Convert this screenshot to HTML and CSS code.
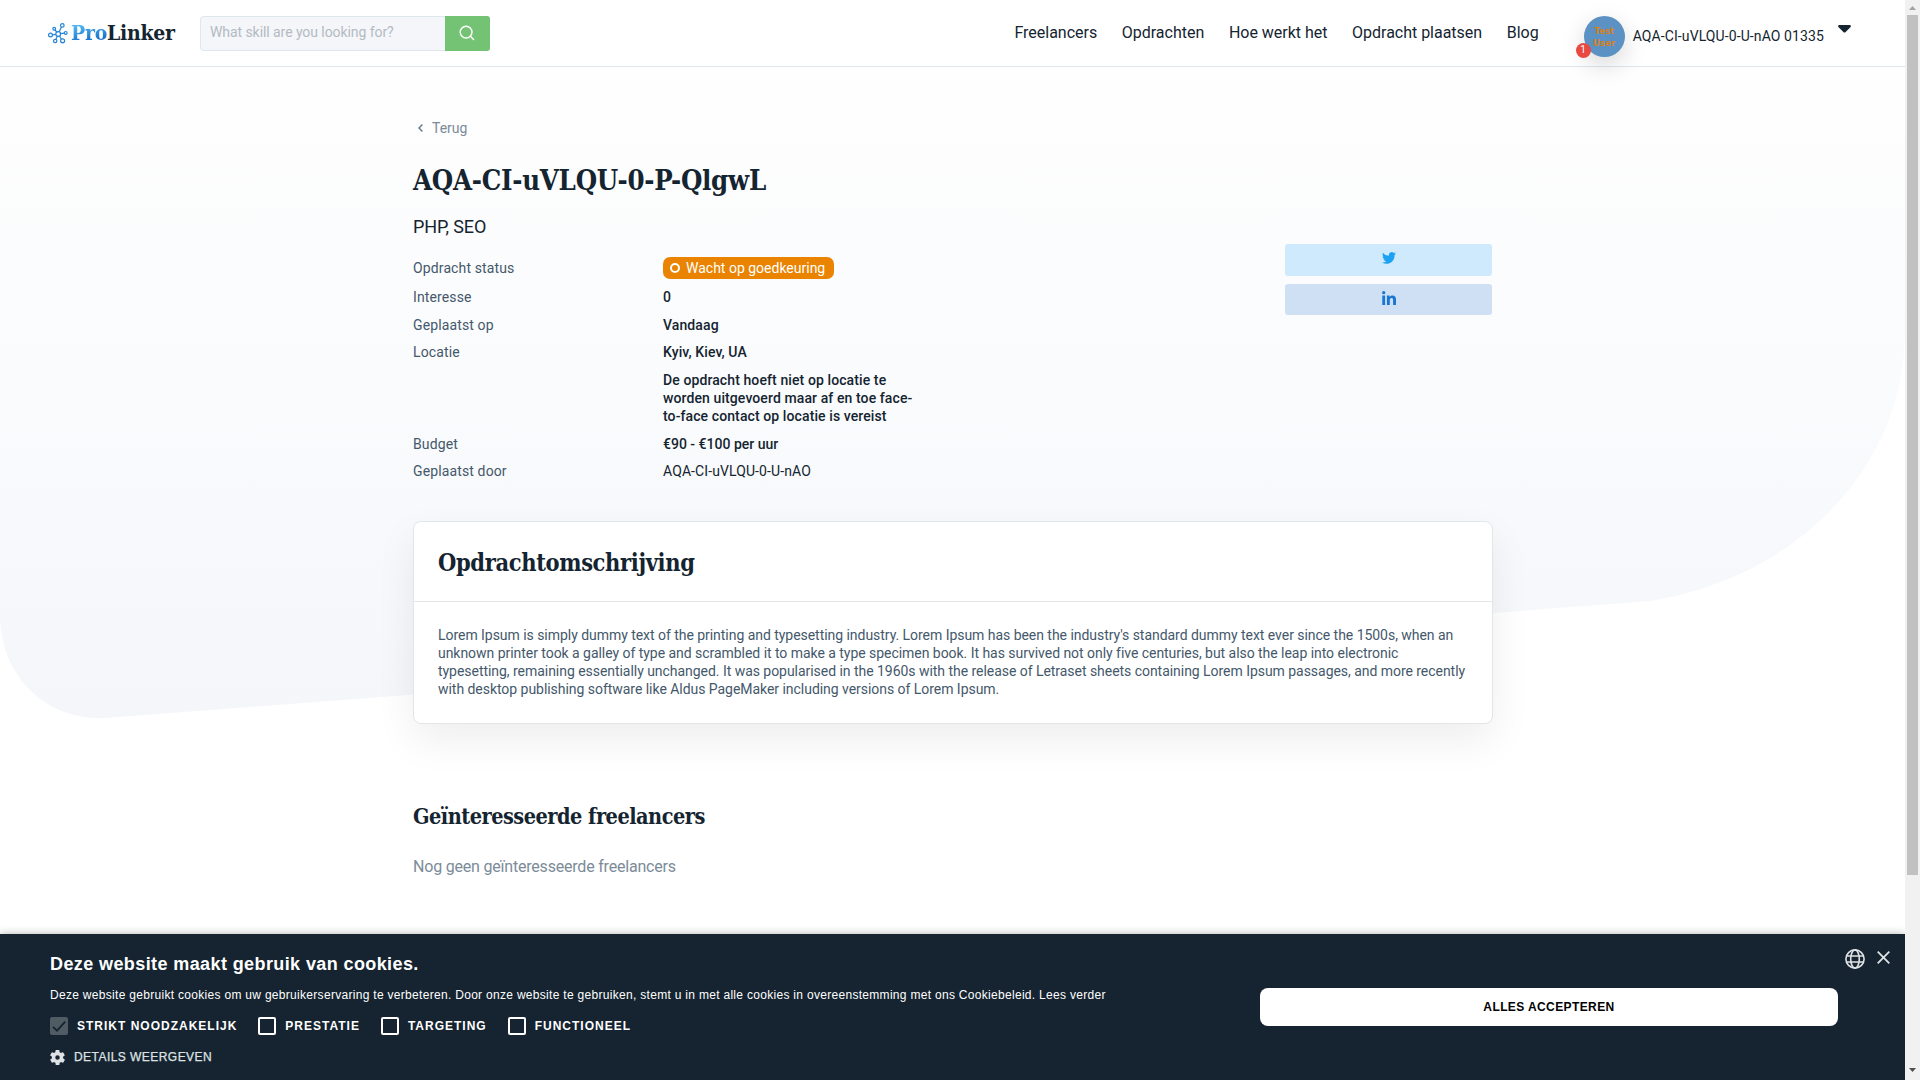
FILE: index.html
```html
<!DOCTYPE html>
<html lang="nl">
<head>
<meta charset="utf-8">
<title>AQA-CI-uVLQU-0-P-QlgwL - ProLinker</title>
<link rel="stylesheet" href="styles.css">
</head>
<body>
<div class="page">
  <header class="topbar">
    <a class="logo">
      <svg class="logo-mark" width="20" height="21" viewBox="0 0 20 21" fill="none" stroke="#2484d6" stroke-width="1.2">
        <circle cx="10.2" cy="11" r="2.4"/><circle cx="14.3" cy="2.4" r="1.8"/><circle cx="6.2" cy="5.8" r="1.4"/><circle cx="2.5" cy="12" r="1.9"/><circle cx="17.7" cy="9.9" r="1.4"/><circle cx="7.2" cy="18" r="1.7"/><circle cx="14.6" cy="17.8" r="2"/>
        <path d="M11.2 8.8l2.3-4.7M8.8 9L7 7M7.8 11.3l-3.4.5M12.6 10.7l3.7-.6M9.3 13.2l-1.5 3.2M11.5 13l1.9 3.2"/>
      </svg>
      <span class="logo-text"><span class="logo-pro">Pro</span>Linker</span>
    </a>
    <div class="search">
      <span class="search-input">What skill are you looking for?</span>
      <span class="search-button">
        <svg width="16" height="16" viewBox="0 0 16 16" fill="none" stroke="#fff" stroke-width="1.4" stroke-linecap="round"><circle cx="7.1" cy="7.1" r="5.9"/><path d="M11.6 11.6l3 3"/></svg>
      </span>
    </div>
    <nav class="nav"><a>Freelancers</a><a>Opdrachten</a><a>Hoe werkt het</a><a>Opdracht plaatsen</a><a>Blog</a></nav>
    <div class="user">
      <span class="avatar">Test<br>User<span class="count">1</span></span>
      <span class="user-name">AQA-CI-uVLQU-0-U-nAO 01335</span>
      <svg class="caret" width="13" height="8" viewBox="0 0 13 8"><path d="M1 0h11q1.4 0.8.6 1.9L7.4 7.2q-.9.8-1.8 0L.4 1.9Q-.4.8 1 0z" fill="#142430"/></svg>
    </div>
  </header>

  <main class="main">
    <svg class="backdrop" width="1905" height="660" viewBox="0 67 1905 660">
      <defs><linearGradient id="fade" x1="0" y1="0" x2="0" y2="1"><stop offset="0" stop-color="#fefefe"/><stop offset=".5" stop-color="#fafbfd"/><stop offset="1" stop-color="#f4f6f9"/></linearGradient></defs>
      <path d="M0 67H1905V335C1903 464 1802 576 1650 601L105 718C45 721 0 675 0 615z" fill="url(#fade)"/>
    </svg>
    <div class="content">
      <a class="back">
        <svg width="5" height="8" viewBox="0 0 5 8" fill="none" stroke="#66798a" stroke-width="1.4"><path d="M4.4.6L1 4l3.4 3.4"/></svg>
        Terug
      </a>
      <h1>AQA-CI-uVLQU-0-P-QlgwL</h1>
      <p class="skills">PHP, SEO</p>
      <section class="summary">
        <dl class="facts">
          <div class="fact status"><dt>Opdracht status</dt><dd><span class="pill"><i class="ring"></i>Wacht op goedkeuring</span></dd></div>
          <div class="fact"><dt>Interesse</dt><dd>0</dd></div>
          <div class="fact"><dt>Geplaatst op</dt><dd>Vandaag</dd></div>
          <div class="fact"><dt>Locatie</dt><dd>Kyiv, Kiev, UA</dd></div>
          <div class="fact"><dt></dt><dd>De opdracht hoeft niet op locatie te<br>worden uitgevoerd maar af en toe face-<br>to-face contact op locatie is vereist</dd></div>
          <div class="fact"><dt>Budget</dt><dd class="budget">€90 - €100 per uur</dd></div>
          <div class="fact"><dt>Geplaatst door</dt><dd class="plain">AQA-CI-uVLQU-0-U-nAO</dd></div>
        </dl>
        <div class="share">
          <a class="twitter"><svg width="14" height="12" viewBox="0 2 24 20" preserveAspectRatio="none"><path fill="#1da1f2" d="M23.95 4.57a10 10 0 0 1-2.82.77 4.96 4.96 0 0 0 2.16-2.72c-.95.55-2 .95-3.13 1.18a4.92 4.92 0 0 0-8.38 4.48C7.69 8.09 4.07 6.13 1.64 3.16a4.82 4.82 0 0 0-.67 2.48c0 1.71.87 3.21 2.19 4.1a4.9 4.9 0 0 1-2.23-.62v.06a4.92 4.92 0 0 0 3.95 4.83 5 5 0 0 1-2.21.08 4.94 4.94 0 0 0 4.6 3.42A9.87 9.87 0 0 1 0 19.54a13.99 13.99 0 0 0 7.56 2.21c9.05 0 13.99-7.5 13.99-13.98 0-.21 0-.42-.02-.63a9.94 9.94 0 0 0 2.46-2.55z"/></svg></a>
          <a class="linkedin"><svg width="14" height="14" viewBox="0 0 14 14" fill="#1976d2"><circle cx="1.7" cy="1.7" r="1.65"/><path d="M.3 4.6h2.8V14H.3zM4.9 4.6h2.7v1.3c.5-.9 1.5-1.5 2.8-1.5 2.8 0 3.6 1.7 3.6 4.3V14h-2.9V9.3c0-1.3-.2-2.4-1.5-2.4S7.8 7.9 7.8 9.2V14H4.9z"/></svg></a>
        </div>
      </section>
      <section class="card">
        <h2>Opdrachtomschrijving</h2>
        <p>Lorem Ipsum is simply dummy text of the printing and typesetting industry. Lorem Ipsum has been the industry's standard dummy text ever since the 1500s, when an<br>unknown printer took a galley of type and scrambled it to make a type specimen book. It has survived not only five centuries, but also the leap into electronic<br>typesetting, remaining essentially unchanged. It was popularised in the 1960s with the release of Letraset sheets containing Lorem Ipsum passages, and more recently<br>with desktop publishing software like Aldus PageMaker including versions of Lorem Ipsum.</p>
      </section>
      <section class="interested">
        <h3>Geïnteresseerde freelancers</h3>
        <p>Nog geen geïnteresseerde freelancers</p>
      </section>
    </div>
  </main>

  <aside class="cookies">
    <div class="cookie-info">
      <h4>Deze website maakt gebruik van cookies.</h4>
      <p>Deze website gebruikt cookies om uw gebruikerservaring te verbeteren. Door onze website te gebruiken, stemt u in met alle cookies in overeenstemming met ons Cookiebeleid. <a>Lees verder</a></p>
      <div class="options">
        <label><span class="box checked"><svg width="18" height="18" viewBox="0 0 18 18" fill="none" stroke="#142430" stroke-width="1.8"><path d="M3 9.8l4 3.8L15.2 4.6"/></svg></span>STRIKT NOODZAKELIJK</label>
        <label><span class="box"></span>PRESTATIE</label>
        <label><span class="box"></span>TARGETING</label>
        <label><span class="box"></span>FUNCTIONEEL</label>
      </div>
      <div class="details">
        <svg width="15" height="15" viewBox="2 2 20 20"><path fill="#dfe2e4" d="M19.4 13a7.5 7.5 0 0 0 0-2l2.1-1.7a.5.5 0 0 0 .1-.6l-2-3.5a.5.5 0 0 0-.6-.2l-2.5 1a7.3 7.3 0 0 0-1.7-1l-.4-2.6a.5.5 0 0 0-.5-.4h-4a.5.5 0 0 0-.4.4L9.1 5a7.7 7.7 0 0 0-1.7 1l-2.5-1a.5.5 0 0 0-.6.2l-2 3.5a.5.5 0 0 0 .1.6L4.6 11a8 8 0 0 0 0 2l-2.1 1.7a.5.5 0 0 0-.1.6l2 3.5c.1.2.4.3.6.2l2.5-1a7.3 7.3 0 0 0 1.7 1l.4 2.6c0 .2.2.4.4.4h4c.3 0 .5-.2.5-.4l.4-2.6a7.7 7.7 0 0 0 1.7-1l2.5 1c.2.1.5 0 .6-.2l2-3.5a.5.5 0 0 0-.1-.6zM12 15a3 3 0 1 1 0-6 3 3 0 0 1 0 6z"/></svg>
        <span>DETAILS WEERGEVEN</span>
      </div>
    </div>
    <button class="accept">ALLES ACCEPTEREN</button>
    <div class="tools">
      <svg width="20" height="20" viewBox="0 0 20 20" fill="none" stroke="#dfe2e4" stroke-width="1.6"><circle cx="10" cy="10" r="9.1"/><ellipse cx="10" cy="10" rx="4.3" ry="9.1"/><path d="M1.7 7h16.6M1.7 13h16.6"/></svg>
      <svg class="close" width="13" height="13" viewBox="0 0 13 13" stroke="#dfe2e4" stroke-width="1.8"><path d="M.7.7l11.6 11.6M12.3.7L.7 12.3"/></svg>
    </div>
  </aside>
</div>
<div class="scrollbar">
  <svg width="7" height="4" viewBox="0 0 7 4"><path d="M3.5 0L7 4H0z" fill="#a3a3a3"/></svg>
  <span class="thumb"></span>
  <svg width="7" height="4" viewBox="0 0 7 4"><path d="M0 0h7L3.5 4z" fill="#505050"/></svg>
</div>
</body>
</html>
```
FILE: styles.css
```css
* { box-sizing: border-box; }
body {
  margin: 0; height: 1080px; display: flex; overflow: hidden;
  background: #fff; color: #142430;
  font-family: Roboto, "Liberation Sans", sans-serif; font-size: 14px;
}
h1, h2, h3, h4, p, dl, dd { margin: 0; }
svg { display: block; flex: none; }
.page { position: relative; width: 1905px; height: 1080px; overflow: hidden; }

.topbar { position: relative; z-index: 1; display: flex; align-items: flex-start; height: 67px; padding-left: 48px; background: #fff; border-bottom: 1px solid #dfe7ee; }
.logo { display: flex; width: 152px; gap: 3px; padding-top: 23px; }
.logo-text { font: bold 21px/24px "Roboto Slab", "DejaVu Serif Condensed", serif; letter-spacing: -.25px; margin-top: -2px; white-space: nowrap; }
.logo-pro { color: transparent; background: linear-gradient(170deg, #55b8f2 20%, #1a74ca 75%); -webkit-background-clip: text; background-clip: text; }
.search { display: flex; width: 290px; height: 35px; margin-top: 16px; }
.search-input { flex: 1; padding-left: 9px; border: 1px solid #dfe7ee; border-right: 0; border-radius: 4px 0 0 4px; background: #f5f6f9; color: #b2bbc3; line-height: 31px; letter-spacing: -.07px; }
.search-button { display: flex; width: 45px; align-items: center; justify-content: center; border-radius: 0 3px 3px 0; background: #74c374; }
.search-button svg { margin: -2px 2px 0 0; }
.nav { display: flex; gap: 24.7px; margin-left: 524.5px; font-size: 16px; line-height: 24px; padding-top: 21px; letter-spacing: -.02px; white-space: nowrap; }
.user { display: flex; margin-left: 45px; padding-top: 16px; }
.avatar { position: relative; width: 41px; height: 41px; padding-top: 9px; border-radius: 50%; background: #5b91c3; color: #d8801a; box-shadow: 0 8px 24px rgba(0,0,0,.16); font: bold 8.6px/12px "DejaVu Sans", sans-serif; text-align: center; }
.count { position: absolute; left: -8px; top: 27px; width: 15px; height: 15px; border-radius: 50%; background: #e84a42; color: #fff; font: 10px/14px Roboto, sans-serif; }
.user-name { margin-left: 8px; width: 205px; line-height: 40px; letter-spacing: .1px; white-space: nowrap; }
.caret { margin-top: 9px; }

.main { position: relative; }
.backdrop { position: absolute; left: 0; top: 0; }
.content { position: relative; width: 1080px; margin-left: 413px; padding-top: 51px; }
.back { display: flex; align-items: center; gap: 9px; padding-left: 5px; height: 20px; line-height: 20px; color: #7c8b99; }
h1 { margin-top: 24px; font: bold 27.3px/36px "Roboto Slab", "DejaVu Serif Condensed", serif; letter-spacing: -.25px; }
.skills { margin-top: 17px; font-size: 18px; line-height: 24px; letter-spacing: -.1px; }
.summary { display: flex; justify-content: space-between; margin-top: 18px; }
.facts { line-height: 18.2px; }
.fact { display: flex; padding-bottom: 9.3px; }
.fact dt { width: 250px; color: #44586b; letter-spacing: .13px; }
.fact dd { font-weight: 500; letter-spacing: .1px; }
.fact dd.plain { font-weight: 400; }
.fact dd.budget { letter-spacing: 0; }
.status { height: 31.2px; line-height: 22px; }
.pill { display: flex; align-items: center; width: 171px; height: 22px; padding-left: 7px; gap: 6px; border-radius: 7px; background: #e98300; color: #fff; font-weight: 400; letter-spacing: 0; line-height: 21px; white-space: nowrap; }
.ring { width: 10px; height: 10px; border: 2px solid #fff; border-radius: 50%; }
.share { display: flex; flex-direction: column; gap: 8px; width: 207px; margin: -13px 1px 0 0; }
.share a { display: flex; justify-content: center; border-radius: 3px; }
.twitter { height: 32px; padding-top: 8px; background: #d0eafd; }
.linkedin { height: 31px; padding-top: 7px; background: #cfe0f5; }
.card { height: 203px; margin-top: 31px; border: 1px solid #e2e6e9; border-radius: 8px; background: #fff; box-shadow: 0 16px 40px rgba(0,0,0,.07); }
.card h2 { height: 80px; padding: 2px 24px 0; border-bottom: 1px solid #e2e6e9; font: bold 23.4px/78px "Roboto Slab", "DejaVu Serif Condensed", serif; letter-spacing: -.35px; }
.card p { padding: 24px; color: #44586b; line-height: 18px; letter-spacing: -.04px; white-space: nowrap; }
.interested h3 { margin-top: 78px; font: bold 21.5px/30px "Roboto Slab", "DejaVu Serif Condensed", serif; letter-spacing: -.5px; }
.interested p { margin-top: 23px; color: #7c8b99; font-size: 16px; line-height: 24px; letter-spacing: -.2px; }

.cookies { position: absolute; left: 0; right: 0; bottom: 0; z-index: 2; display: flex; height: 146px; padding-left: 50px; background: #152430; color: #fff; box-shadow: 0 0 8px rgba(0,0,0,.3); font-family: "Liberation Sans", Arial, sans-serif; }
.cookie-info { width: 1210px; padding-top: 18px; }
.cookies h4 { font-size: 18px; line-height: 24px; letter-spacing: .4px; }
.cookies p { margin-top: 10px; font-size: 12px; line-height: 18px; letter-spacing: .3px; white-space: nowrap; }
.options { display: flex; gap: 21px; margin-top: 13px; }
.options label { display: flex; gap: 9px; font-weight: bold; font-size: 12px; line-height: 18px; letter-spacing: 1px; }
.box { width: 18px; height: 18px; border: 2px solid #fff; border-radius: 2px; }
.box.checked { border: 0; background: #505b64; }
.details { display: flex; align-items: center; gap: 9px; margin-top: 14px; color: #dfe2e4; font-size: 12px; line-height: 15px; letter-spacing: .45px; }
.details span { padding-top: 1px; -webkit-text-stroke: .25px #dfe2e4; }
.accept { width: 578px; height: 38px; margin-top: 54px; border: 0; border-radius: 8px; background: #fff; color: #000; font: bold 12px "Liberation Sans", Arial, sans-serif; letter-spacing: .4px; }
.tools { display: flex; gap: 12px; margin-left: 7px; padding-top: 15px; }
.close { margin-top: 2px; }

.scrollbar { display: flex; flex-direction: column; align-items: center; width: 15px; height: 1080px; padding: 6px 0; background: #f1f1f1; }
.thumb { width: 11px; height: 860px; margin: 5px 0 193px; background: #c1c1c1; }
```
